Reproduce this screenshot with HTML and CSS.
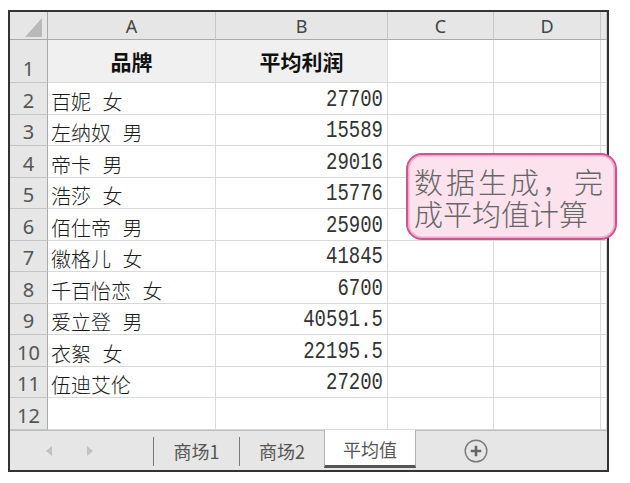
FILE: index.html
```html
<!DOCTYPE html>
<html lang="zh-CN">
<head>
<meta charset="utf-8">
<title>平均值</title>
<link rel="stylesheet" href="styles.css">
</head>
<body>
<div class="sheet">
  <div class="grid">
    <div class="c corner"><svg width="37" height="27" viewBox="0 0 37 27"><polygon points="15,25 32,6 32,25" fill="#b9b9b9"/></svg></div>
    <div class="c h">A</div>
    <div class="c h">B</div>
    <div class="c h">C</div>
    <div class="c h">D</div>
    <div class="c h"></div>

    <div class="c n">1</div>
    <div class="c th">品牌</div>
    <div class="c th">平均利润</div>
    <div class="c"></div><div class="c"></div><div class="c"></div>

    <div class="c n">2</div><div class="c t">百妮 女</div><div class="c v"><span>27700</span></div><div class="c"></div><div class="c"></div><div class="c"></div>
    <div class="c n">3</div><div class="c t">左纳奴 男</div><div class="c v"><span>15589</span></div><div class="c"></div><div class="c"></div><div class="c"></div>
    <div class="c n">4</div><div class="c t">帝卡 男</div><div class="c v"><span>29016</span></div><div class="c"></div><div class="c"></div><div class="c"></div>
    <div class="c n">5</div><div class="c t">浩莎 女</div><div class="c v"><span>15776</span></div><div class="c"></div><div class="c"></div><div class="c"></div>
    <div class="c n">6</div><div class="c t">佰仕帝 男</div><div class="c v"><span>25900</span></div><div class="c"></div><div class="c"></div><div class="c"></div>
    <div class="c n">7</div><div class="c t">徽格儿 女</div><div class="c v"><span>41845</span></div><div class="c"></div><div class="c"></div><div class="c"></div>
    <div class="c n">8</div><div class="c t">千百怡恋 女</div><div class="c v"><span>6700</span></div><div class="c"></div><div class="c"></div><div class="c"></div>
    <div class="c n">9</div><div class="c t">爱立登 男</div><div class="c v"><span>40591.5</span></div><div class="c"></div><div class="c"></div><div class="c"></div>
    <div class="c n">10</div><div class="c t">衣絮 女</div><div class="c v"><span>22195.5</span></div><div class="c"></div><div class="c"></div><div class="c"></div>
    <div class="c n">11</div><div class="c t">伍迪艾伦</div><div class="c v"><span>27200</span></div><div class="c"></div><div class="c"></div><div class="c"></div>
    <div class="c n">12</div><div class="c t"></div><div class="c"></div><div class="c"></div><div class="c"></div><div class="c"></div>
  </div>

  <div class="tabs">
    <div class="nav">
      <svg class="arrow" width="6" height="10" viewBox="0 0 6 10"><polygon points="6,0 6,10 0,5" fill="#c2c2c2"/></svg>
      <svg class="arrow" width="6" height="10" viewBox="0 0 6 10"><polygon points="0,0 0,10 6,5" fill="#c2c2c2"/></svg>
    </div>
    <div class="sep"></div>
    <div class="tab">商场1</div>
    <div class="sep"></div>
    <div class="tab tab2">商场2</div>
    <div class="tab active">平均值</div>
    <svg class="add" width="24" height="24" viewBox="0 0 24 24"><circle cx="12" cy="12" r="10.8" fill="none" stroke="#7a7a7a" stroke-width="1.4"/><path d="M12 6.8v10.4M6.8 12h10.4" stroke="#666" stroke-width="2.6"/></svg>
  </div>

  <div class="note">
    <div class="l1">数据生成，完</div>
    <div class="l2">成平均值计算</div>
  </div>
</div>
</body>
</html>
```

FILE: styles.css
```css
body {
  margin: 0;
  background: #fff;
}

.sheet {
  position: relative;
  margin: 10px 0 0 8px;
  width: 597px;
  border: 2px solid #333;
  font-family: "Noto Sans CJK SC", sans-serif;
}

.grid {
  display: grid;
  grid-template-columns: 38px 168px 172px 106px 107px 6px;
  grid-template-rows: 28px 43px 32px 31px 32px 31px 32px 31px 32px 31px 32px 31px 32px;
}

.c {
  box-sizing: border-box;
  border-right: 1px solid #d9d9d9;
  border-bottom: 1px solid #d9d9d9;
  display: flex;
  align-items: flex-end;
  overflow: hidden;
  white-space: nowrap;
}

.corner {
  background: #e6e6e6;
  border-right-color: #a9a9a9;
  border-bottom-color: #a9a9a9;
  align-items: stretch;
}

.h {
  background: #e6e6e6;
  border-right-color: #c6c6c6;
  border-bottom-color: #a9a9a9;
  justify-content: center;
  font-family: "Noto Sans", sans-serif;
  font-size: 18px;
  line-height: 25px;
  color: #444;
}

.n {
  background: #e6e6e6;
  border-right-color: #a9a9a9;
  border-bottom-color: #c6c6c6;
  justify-content: center;
  font-family: "Noto Sans", sans-serif;
  font-size: 20px;
  line-height: 26px;
  color: #555;
}

.th {
  background: #f0f0f0;
  justify-content: center;
  align-items: center;
  font-weight: 700;
  font-size: 21px;
  color: #111;
}

.t {
  padding-left: 3px;
  font-size: 20px;
  font-weight: 300;
  line-height: 24px;
  color: #1a1a1a;
  word-spacing: 7px;
}

.v {
  justify-content: flex-end;
  padding-right: 4px;
  padding-bottom: 2px;
  font-family: "Liberation Mono", monospace;
  font-size: 19px;
  line-height: 24px;
  color: #333;
}

.v span {
  display: inline-block;
  transform: scaleY(1.28);
}

.tabs {
  display: flex;
  height: 40px;
  box-sizing: border-box;
  background: #e6e6e6;
  border-top: 1px solid #bdbdbd;
  font-size: 18px;
  color: #555;
}

.nav {
  width: 143px;
  display: flex;
  align-items: center;
  gap: 35px;
  padding-left: 36px;
  box-sizing: border-box;
}

.sep {
  width: 1px;
  background: #7a7a7a;
  margin: 6px 0 4px;
}

.tab {
  width: 85px;
  display: flex;
  align-items: center;
  justify-content: center;
}

.tab2 {
  width: 84px;
}

.tab.active {
  width: 92px;
  box-sizing: border-box;
  background: #fff;
  border-left: 1px solid #b0b0b0;
  border-right: 1px solid #b0b0b0;
  border-bottom: 3px solid #555;
  margin: -1px 0 2px;
  padding-top: 2px;
}

.add {
  align-self: center;
  margin-left: 48px;
}

.note {
  position: absolute;
  left: 396px;
  top: 141px;
  width: 211px;
  height: 87px;
  box-sizing: border-box;
  border: 2px solid #d2538f;
  border-radius: 16px;
  background: #fbe2ed;
  box-shadow: inset 0 0 0 1.5px #f0aacb;
  padding: 10px 4px 0 6px;
  color: #666;
  font-size: 29px;
  font-weight: 300;
  line-height: 32px;
}

.l1 {
  letter-spacing: 3px;
}
```
